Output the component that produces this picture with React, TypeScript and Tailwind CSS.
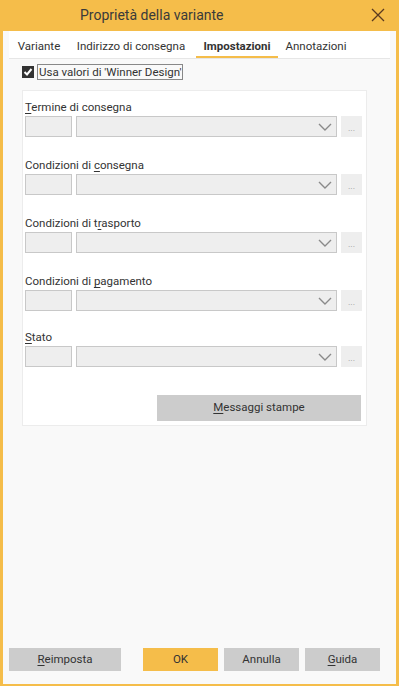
import React, { useState } from "react";

type FieldRowProps = {
  before: string;
  hot: string;
  after: string;
  gap?: string;
};

const Chevron = () => (
  <svg width="14" height="8" viewBox="0 0 14 8" className="text-[#8a8a8a]">
    <path d="M1 1 L7 7 L13 1" fill="none" stroke="currentColor" strokeWidth="1.4" />
  </svg>
);

const FieldRow: React.FC<FieldRowProps> = ({ before, hot, after, gap = "mb-[20px]" }) => {
  return (
    <div className={gap}>
      <div className="h-[16px] leading-[16px] mb-[1px] text-[11.5px] text-[#333] whitespace-nowrap">
        {before}
        <span className="underline underline-offset-2">{hot}</span>
        {after}
      </div>
      <div className="flex items-center h-[21px]">
        <div className="w-[47px] h-[21px] border border-[#c8c8c8] bg-[#eeeeee]" />
        <div className="ml-[4px] w-[261px] h-[21px] border border-[#c8c8c8] bg-[#eeeeee] flex items-center justify-end pr-[4px]">
          <Chevron />
        </div>
        <div className="ml-[4px] w-[21px] h-[21px] bg-[#eeeeee] flex items-end justify-center pb-[6px]">
          <span className="text-[9px] leading-[6px] text-[#999]">...</span>
        </div>
      </div>
    </div>
  );
};

const tabs = [
  { name: "Variante", cls: "w-[60px]" },
  { name: "Indirizzo di consegna", cls: "w-[124px]" },
  { name: "Impostazioni", cls: "ml-[3px] w-[82px]" },
  { name: "Annotazioni", cls: "w-[76px]" },
];

export default function App() {
  const [activeTab, setActiveTab] = useState("Impostazioni");
  const [useDefaults, setUseDefaults] = useState(true);

  return (
    <div
      className="w-[399px] h-[686px] bg-[#f5bd4a] flex flex-col text-[#333]"
      style={{ fontFamily: 'Roboto, "Liberation Sans", sans-serif' }}
    >
      {/* title bar */}
      <div className="h-[31px] flex items-center relative shrink-0">
        <div className="pl-[80px] text-[14px] text-[#3a3a3a] whitespace-nowrap">Proprietà della variante</div>
        <button className="absolute right-[14px] top-[8px] w-[14px] h-[14px] text-[#5a3a20]">
          <svg width="14" height="14" viewBox="0 0 14 14">
            <path d="M1 1 L13 13 M13 1 L1 13" stroke="currentColor" strokeWidth="1.3" />
          </svg>
        </button>
      </div>

      {/* body */}
      <div className="flex-1 mx-[3px] mb-[2px] bg-[#f9f9f9] flex flex-col">
        <div className="mx-[6px] flex border-b border-[#e6e6e6] h-[28px] items-end bg-white">
          {tabs.map((t) => (
            <button
              key={t.name}
              onClick={() => setActiveTab(t.name)}
              className={
                t.name === activeTab
                  ? `${t.cls} h-[24px] pt-[3px] text-[11.5px] font-bold text-[#333] border-b-2 border-[#f5bd4a] whitespace-nowrap`
                  : `${t.cls} h-[24px] pt-[3px] text-[11.5px] text-[#333] border-b-2 border-transparent whitespace-nowrap`
              }
            >
              {t.name}
            </button>
          ))}
        </div>

        <label className="flex items-center mt-[5px] ml-[19px] h-[16px]">
          <span
            onClick={() => setUseDefaults(!useDefaults)}
            className="w-[12px] h-[12px] bg-[#333] flex items-center justify-center"
          >
            {useDefaults && (
              <svg width="10" height="10" viewBox="0 0 10 10">
                <path d="M1.5 5 L4 7.5 L8.5 2" fill="none" stroke="white" strokeWidth="2" />
              </svg>
            )}
          </span>
          <span className="ml-[3px] border border-[#888] px-[1px] h-[16px] leading-[14px] text-[11.5px] text-[#333] whitespace-nowrap">
            Usa valori di 'Winner Design'
          </span>
        </label>

        <div className="mt-[10px] ml-[19px] w-[345px] bg-white border border-[#ececec] pt-[8px] pl-[2px] pb-[4px]">
          <FieldRow before="" hot="T" after="ermine di consegna" />
          <FieldRow before="Condizioni di " hot="c" after="onsegna" />
          <FieldRow before="Condizioni di t" hot="r" after="asporto" />
          <FieldRow before="Condizioni di " hot="p" after="agamento" gap="mb-[18px]" />
          <FieldRow before="" hot="S" after="tato" gap="mb-[0px]" />
          <div className="flex justify-end pr-[5px] mt-[28px]">
            <button className="w-[204px] h-[26px] bg-[#cccccc] text-[11.5px] text-[#333]">
              <span className="underline underline-offset-2">M</span>essaggi stampe
            </button>
          </div>
        </div>

        <div className="flex-1" />

        <div className="flex items-center px-[6px] pb-[13px]">
          <button className="w-[112px] h-[23px] bg-[#cccccc] text-[11.5px] text-[#333]">
            <span className="underline underline-offset-2">R</span>eimposta
          </button>
          <button className="ml-[22px] w-[75px] h-[23px] bg-[#f5bd4a] text-[11.5px] text-[#333]">OK</button>
          <button className="ml-[6px] w-[75px] h-[23px] bg-[#cccccc] text-[11.5px] text-[#333]">Annulla</button>
          <button className="ml-[6px] w-[75px] h-[23px] bg-[#cccccc] text-[11.5px] text-[#333]">
            <span className="underline underline-offset-2">G</span>uida
          </button>
        </div>
      </div>
    </div>
  );
}
